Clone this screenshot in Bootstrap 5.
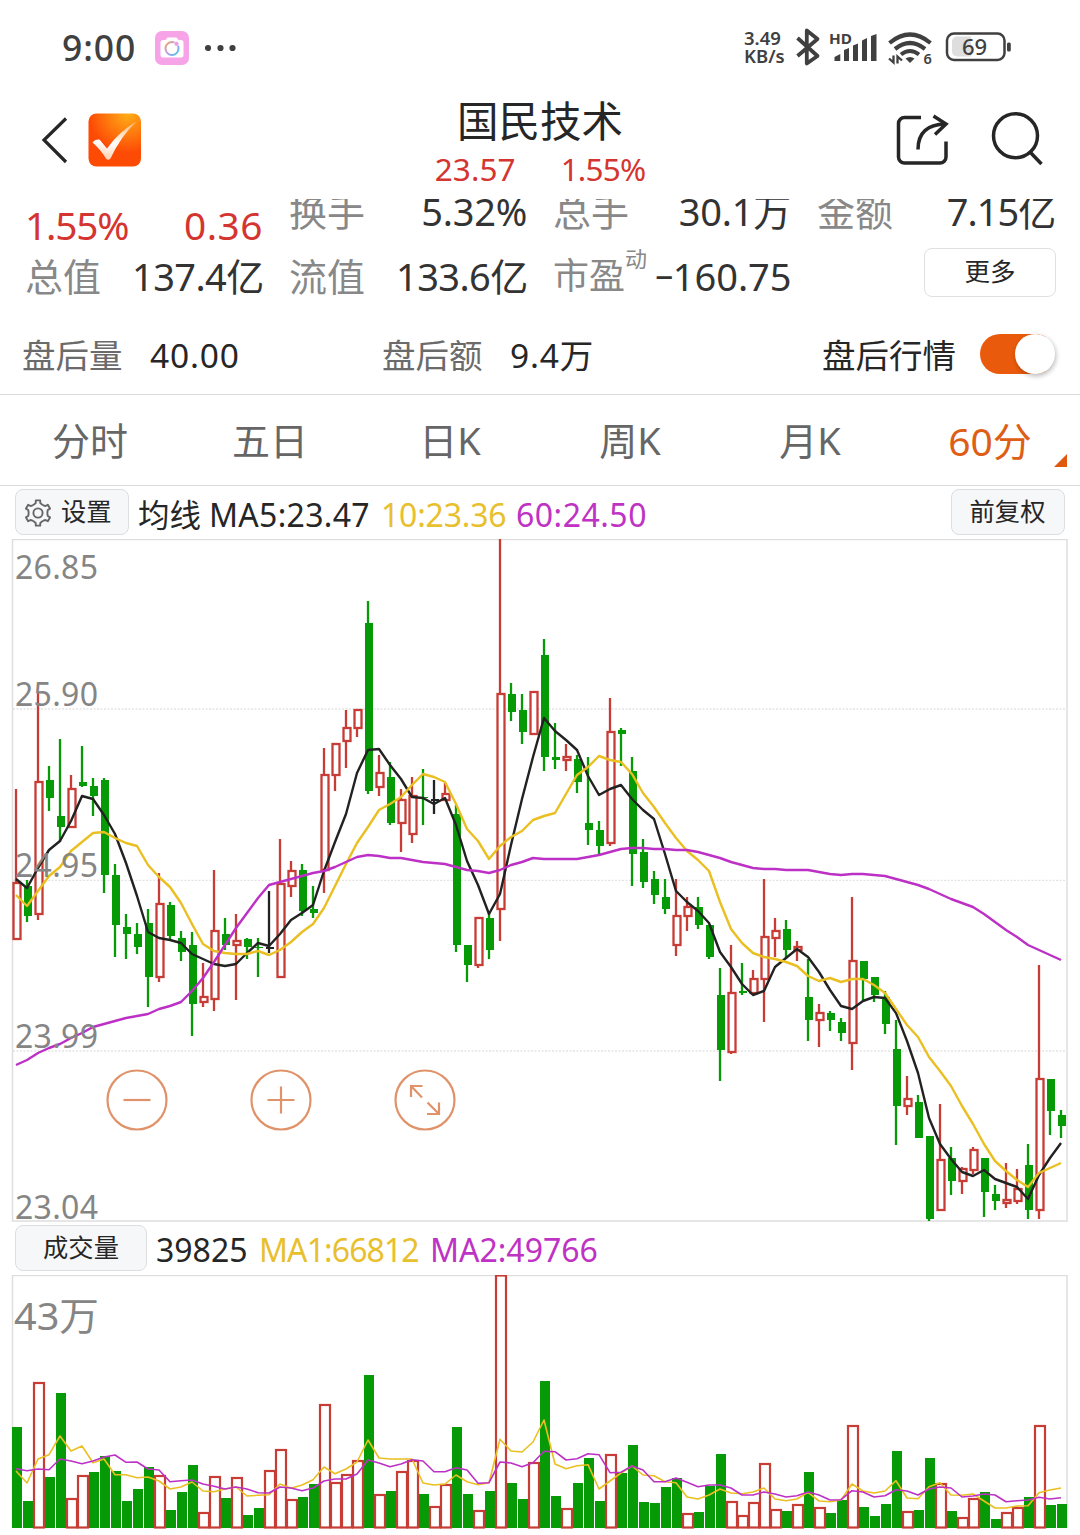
<!DOCTYPE html>
<html lang="zh-CN">
<head>
<meta charset="utf-8">
<meta name="viewport" content="width=device-width, initial-scale=1">
<title>国民技术</title>
<link href="https://cdn.jsdelivr.net/npm/bootstrap@5.3.0/dist/css/bootstrap.min.css" rel="stylesheet">
<style>
body{width:1080px;height:1535px;overflow:hidden;background:#fff;color:#262626;font-family:"Noto Sans","Noto Sans CJK SC",sans-serif;line-height:1;white-space:nowrap}
svg{display:block;flex:none}
svg text{font-family:"Noto Sans","Noto Sans CJK SC",sans-serif}
.status{height:95px;padding:0 69px 0 62px;color:#404040}
.clock{font-size:35.5px;font-weight:500;letter-spacing:.9px;width:93px}
.speed{font-size:18.5px;font-weight:600;line-height:18.5px;width:51px;padding-bottom:1px}
.head{height:104px}
.head-side{width:360px}
.stock{font-size:41.5px;line-height:52px}
.sub{font-size:31.5px;line-height:44px;color:#d43530;letter-spacing:.1px}
.quotes{height:127px;padding-left:25px;column-gap:26px;overflow:hidden}
.qcol{width:238px}
.cell{height:62px;font-size:38px;line-height:62px}
.cell.first{height:46px;line-height:25px}
.cell.first.big{line-height:52px;letter-spacing:-1.2px;color:#d43530;font-size:38.8px}
.big span+span{letter-spacing:.5px}
.key{color:#888}
.val{color:#333;letter-spacing:-.6px;margin-right:-.6px}
.first .val{letter-spacing:-.2px;margin-right:-.2px}
.sup{font-size:22px;line-height:24px;align-self:flex-start;margin-top:1px;width:39px}
.pe{letter-spacing:0;font-size:38px}
.pe .neg{display:inline-block;transform:scaleX(.85);margin-left:-6px;width:18px;transform-origin:left}
.more{width:132px;height:49px;border:1.5px solid #e0e0e0;border-radius:8px;font-size:25.5px;line-height:40px;padding:0 0 4px;color:#262626;margin-right:-1px}
.after{height:69px;padding:0 25px 9px 22px;font-size:33.5px;border-bottom:1.5px solid #d9d9d9}
.after .key{color:#6b6b6b}
.wide{letter-spacing:.8px}
.toggle{width:75px;height:40px;border-radius:20px;background:linear-gradient(90deg,#e95a0c 66px,transparent 66px);margin:0 0 4px 24px}
.knob{width:40px;height:40px;border-radius:50%;background:#fff;box-shadow:1px 2px 5px rgba(0,0,0,.28)}
.tabs{height:91px;border-bottom:1.5px solid #d9d9d9;font-size:38px;color:#666}
.tabs .nav-link{width:180px;height:90px;padding:0;color:#666;line-height:91px}
.tabs .nav-link.active{color:#dd5e14;font-size:39px}
.corner{right:13px;bottom:18px;border-left:13px solid transparent;border-bottom:13px solid #e0580e}
.info{height:53px;padding:3px 15.5px 0 15px;font-size:32px}
.chip{height:46px;border:1.5px solid #dcdee0;border-radius:8px;background:#f6f7f9;font-size:25.3px;color:#262626;padding:0 0 2px;line-height:39px}
.gold{color:#e8c02e}.violet{color:#be32c4}
</style>
</head>
<body>
<div class="status d-flex align-items-center justify-content-between">
  <div class="d-flex align-items-center">
    <span class="clock">9:00</span>
    <svg width="34" height="34" viewBox="0 0 34 34"><defs><linearGradient id="ring" x1="0" y1="0" x2="1" y2="1"><stop offset="0" stop-color="#f5a35c"/><stop offset=".5" stop-color="#b79cf0"/><stop offset="1" stop-color="#3fc8e8"/></linearGradient></defs><rect width="34" height="34" rx="7" fill="#f7a3e8"/><path d="M8.500 9h2l2-2.500h9l2 2.500h2.500a2.500 2.500 0 0 1 2.500 2.500V24a2.500 2.500 0 0 1-2.500 2.500h-17.500A2.500 2.500 0 0 1 5.500 24V11.500A2.500 2.500 0 0 1 8.500 9z" fill="#fff"/><circle cx="17" cy="17.500" r="6.500" fill="none" stroke="url(#ring)" stroke-width="2"/><circle cx="21.500" cy="12.800" r="2.400" fill="#e79be8" stroke="#fff" stroke-width=".6"/></svg>
    <svg class="ms-3" width="32" height="8" viewBox="0 0 32 8"><g fill="#404040"><circle cx="3" cy="4" r="3.100"/><circle cx="15.500" cy="4" r="3.100"/><circle cx="27.500" cy="4" r="3.100"/></g></svg>
  </div>
  <div class="d-flex align-items-center">
    <div class="speed"><div>3.49</div><div>KB/s</div></div>
    <svg width="216" height="40" viewBox="795 27.500 216 40">
      <path d="M797.500 37.500L817.500 55.500L806.800 63V30L817.500 38.500L797.500 55.500" fill="none" stroke="#404040" stroke-width="3.800" stroke-linejoin="round"/>
      <text x="829" y="43" font-size="15" font-weight="700" fill="#404040" textLength="23" lengthAdjust="spacingAndGlyphs">HD</text>
      <path d="M834.500 60.500v-4l5.800-3v7zM844 60.500V49.500l5-2V60.500zM853 60.500V45l5-2V60.500zM862 60.500V40l5-2.500V60.500zM871 60.500V35.500l5.500-2V60.500z" fill="#404040"/>
      <g fill="none" stroke="#404040" stroke-width="4.200"><path d="M889.500 42.500Q910 25.500 930.500 42.500"/><path d="M895 48.500Q910 36.500 925 48.500"/><path d="M901 54Q910 47 919 54" stroke-width="4"/></g>
      <path d="M905.500 58q4.500-3 9 0l-4.500 4.500z" fill="#404040"/>
      <path d="M889 58l4.500 4v-7M897.500 63v-7l4.500 4" fill="none" stroke="#404040" stroke-width="2.300"/>
      <text x="923.500" y="63" font-size="14.500" font-weight="600" fill="#404040">6</text>
      <path d="M957 36h14v20h-14a5 5 0 0 1-5-5V41a5 5 0 0 1 5-5z" fill="#dedede"/>
      <rect x="947" y="33" width="57.500" height="26.500" rx="7" fill="none" stroke="#404040" stroke-width="2.500"/>
      <rect x="1007" y="42" width="3.800" height="9" rx="1.500" fill="#404040"/>
      <text x="962" y="54.500" font-size="22" font-weight="500" fill="#404040">69</text>
    </svg>
  </div>
</div>
<header class="head d-flex justify-content-between">
  <div class="head-side d-flex">
    <svg width="150" height="104" viewBox="0 95 150 104"><defs><radialGradient id="sun" cx=".75" cy="0" r=".75"><stop offset="0" stop-color="#ffae17"/><stop offset="1" stop-color="#fd4a05"/></radialGradient><linearGradient id="tick" x1="0" y1="1" x2=".2" y2="0"><stop offset="0" stop-color="#ffc9a4"/><stop offset=".5" stop-color="#fff"/><stop offset="1" stop-color="#ffc48c"/></linearGradient></defs>
    <path d="M66 118.500L44 140L66 162" fill="none" stroke="#262626" stroke-width="3.200"/>
    <rect x="88.500" y="113.500" width="52.500" height="53" rx="8" fill="url(#sun)"/>
    <path d="M92.500 142.500q2.500-3.500 7-3l7.500 9q12-17 29.500-27q-16 15-26 37q-2.500 2.500-4.500 0q-5-8.500-13.500-16z" fill="url(#tick)"/></svg>
  </div>
  <div class="text-center">
    <div class="stock">国民技术</div>
    <div class="sub d-flex justify-content-center"><span style="width:126px;text-align:left">23.57</span><span style="letter-spacing:-.8px">1.55%</span></div>
  </div>
  <div class="head-side d-flex justify-content-end">
    <svg width="190" height="104" viewBox="890 95 190 104"><g fill="none" stroke="#262626" stroke-width="3.500"><path d="M921 117.500H904.500a6 6 0 0 0-6 6V157a6 6 0 0 0 6 6H940a6 6 0 0 0 6-6V141.500"/><path d="M918 149.500Q918 124.500 945.500 124"/><path d="M933.500 116l12.500 8l-11 10.500"/><circle cx="1015.500" cy="135.700" r="22"/><path d="M1030 152l11.500 12"/></g></svg>
  </div>
</header>
<section class="quotes d-flex">
  <div class="qcol">
    <div class="cell first big d-flex justify-content-between"><span>1.55%</span><span>0.36</span></div>
    <div class="cell d-flex justify-content-between"><span class="key">总值</span><span class="val">137.4亿</span></div>
  </div>
  <div class="qcol">
    <div class="cell first d-flex justify-content-between"><span class="key">换手</span><span class="val">5.32%</span></div>
    <div class="cell d-flex justify-content-between"><span class="key">流值</span><span class="val">133.6亿</span></div>
  </div>
  <div class="qcol">
    <div class="cell first d-flex justify-content-between"><span class="key">总手</span><span class="val">30.1万</span></div>
    <div class="cell d-flex"><span class="key" style="font-size:36px">市盈</span><span class="key sup">动</span><span class="val pe ms-auto"><span class="neg">−</span>160.75</span></div>
  </div>
  <div class="qcol">
    <div class="cell first d-flex justify-content-between"><span class="key">金额</span><span class="val" style="letter-spacing:-1px">7.15亿</span></div>
    <div class="d-flex justify-content-end" style="padding-top:3px"><button class="btn more">更多</button></div>
  </div>
</section>
<section class="after d-flex align-items-center">
  <span class="key" style="width:128px">盘后量</span><span class="wide" style="width:232px">40.00</span>
  <span class="key" style="width:128px">盘后额</span><span class="wide">9.4万</span>
  <span class="ms-auto">盘后行情</span>
  <div class="toggle d-flex justify-content-end"><div class="knob"></div></div>
</section>
<nav class="tabs nav flex-nowrap text-center position-relative">
  <a class="nav-link">分时</a><a class="nav-link">五日</a><a class="nav-link">日K</a><a class="nav-link">周K</a><a class="nav-link">月K</a><a class="nav-link active">60分</a>
  <span class="corner position-absolute"></span>
</nav>
<div class="info d-flex align-items-start">
  <button class="btn chip d-flex align-items-center" style="width:114px"><svg width="28" height="28" viewBox="-14 -14 28 28" style="margin:3px 9px 0 8px"><path id="gear" fill="none" stroke="#666" stroke-width="1.900" stroke-linejoin="round"/><circle r="4.600" fill="none" stroke="#666" stroke-width="1.900"/></svg>设置</button>
  <div class="d-flex" style="line-height:51px;margin-left:9px"><span style="font-size:31.500px;width:71px">均线</span><span style="width:172px;letter-spacing:.3px">MA5:23.47</span><span class="gold" style="width:135px;letter-spacing:-.2px">10:23.36</span><span class="violet" style="letter-spacing:.5px">60:24.50</span></div>
  <button class="btn chip ms-auto" style="width:114px">前复权</button>
</div>
<svg id="price" width="1080" height="683" viewBox="0 539 1080 683"></svg>
<div class="info d-flex align-items-start">
  <button class="btn chip" style="width:132px">成交量</button>
  <div class="d-flex" style="line-height:49px;margin-left:9px"><span style="width:103px">39825</span><span class="gold" style="width:171px;letter-spacing:-.9px">MA1:66812</span><span class="violet">MA2:49766</span></div>
</div>
<svg id="volume" width="1080" height="260" viewBox="0 1275 1080 260"></svg>
<script src="https://cdn.jsdelivr.net/npm/bootstrap@5.3.0/dist/js/bootstrap.bundle.min.js"></script>
<script>
// Gear outline: six teeth around a ring
const pts=[];
for(let k=0;k<6;k++){const c=k*60-90;[[-25,9.4],[-13,10.2],[-10,12.8],[10,12.8],[13,10.2],[25,9.4]].forEach(([d,r])=>{const a=(c+d)*Math.PI/180;pts.push((r*Math.cos(a)).toFixed(1)+','+(r*Math.sin(a)).toFixed(1))})}
document.getElementById('gear').setAttribute('d','M'+pts.join('L')+'Z');

// type, high, body top, body bottom, low
const candles=`r 789 883 939 939|g 880 886 916 922|r 693 782 914 920|g 766 780 798 811|g 739 816 827 842|r 775 789 827 827|g 746 782 786 787|g 778 786 796 816|g 778 780 875 893|g 864 875 925 957|g 914 927 934 959|g 923 934 947 954|g 909 923 977 1007|r 873 904 977 982|g 902 905 936 940|g 931 938 952 961|g 932 945 1004 1036|r 963 997 1002 1007|r 870 931 999 1011|g 918 934 945 950|r 914 941 945 1000|g 938 939 947 959|g 938 947 948 977|k 891 947 949 953|r 839 884 977 977|r 861 871 886 897|g 864 870 911 916|g 886 909 913 918|r 748 775 870 893|r 743 744 775 791|r 710 728 741 768|r 709 710 728 737|g 601 623 791 794|r 755 773 787 796|g 762 777 823 825|r 789 800 823 852|r 777 796 834 843|g 769 797 798 825|k 780 799 801 814|r 783 794 800 801|g 805 814 945 952|g 945 945 965 982|r 918 918 965 968|g 913 918 950 959|r 539 694 909 941|g 683 694 712 721|g 694 710 732 744|r 692 692 734 734|g 639 655 757 771|g 723 757 760 769|r 744 757 760 771|g 755 759 782 793|g 757 823 830 845|g 821 830 846 856|r 698 732 843 846|g 728 730 734 766|g 757 771 854 886|g 839 852 882 888|g 871 879 895 904|g 879 897 909 914|r 879 916 945 956|r 897 907 916 931|g 897 907 925 929|g 925 925 957 959|g 968 995 1050 1081|r 945 993 1052 1054|g 963 991 993 995|r 970 979 993 994|r 879 937 979 1022|r 918 931 938 957|g 920 929 950 959|r 941 947 950 961|g 959 997 1020 1041|r 1004 1013 1020 1047|g 1011 1013 1020 1031|g 1018 1022 1033 1041|r 897 961 1043 1070|g 961 961 979 1002|g 977 977 995 1002|g 991 997 1024 1034|g 1020 1049 1106 1145|r 1076 1099 1106 1115|g 1095 1102 1138 1138|g 1136 1136 1219 1221|r 1104 1160 1210 1210|g 1147 1158 1181 1195|r 1167 1169 1181 1194|r 1147 1150 1170 1174|g 1158 1158 1192 1217|g 1185 1194 1201 1210|r 1163 1200 1203 1208|r 1169 1189 1201 1204|g 1144 1165 1210 1219|r 965 1079 1210 1219|g 1079 1079 1111 1135|g 1110 1115 1126 1138`.split('|').map(s=>s.split(' '));
const ma5=[879,888,868,850,841,821,796,799,815,834,863,896,932,938,940,943,954,959,964,966,964,953,943,946,934,920,913,905,871,842,814,773,750,749,765,779,797,798,804,798,825,861,885,914,894,845,799,757,718,731,740,750,776,795,789,785,799,810,819,854,891,902,911,923,952,967,984,995,991,967,958,949,957,972,990,1006,1009,1001,997,998,1013,1041,1073,1118,1144,1159,1172,1176,1170,1179,1183,1187,1199,1175,1158,1143];
const ma10=[895,906,891,876,867,851,842,833,832,838,843,846,865,877,887,903,924,944,951,953,954,954,951,955,950,942,932,924,908,886,864,843,827,810,804,797,785,774,777,782,804,829,841,859,846,837,831,820,816,813,794,775,767,756,760,762,774,793,807,823,838,851,860,871,902,929,943,953,957,959,962,966,976,981,978,982,979,979,985,993,1009,1025,1037,1057,1071,1086,1106,1124,1144,1161,1171,1180,1187,1173,1168,1163];
const ma60=[1065,1060,1053,1048,1044,1038,1033,1027,1024,1021,1018,1016,1014,1009,1006,1002,991,978,962,945,928,913,898,885,882,879,876,873,871,867,862,857,855,856,858,858,860,862,863,864,867,870,871,873,870,865,862,858,859,859,859,859,857,855,852,849,848,848,849,849,850,850,852,855,858,862,865,868,869,869,870,870,870,872,874,875,874,874,875,876,879,882,885,889,894,899,903,907,914,922,930,937,945,950,955,960];
const vols=[1427,1501,1383,1477,1393,1499,1476,1472,1456,1471,1501,1489,1467,1476,1510,1492,1465,1513,1477,1498,1478,1515,1508,1471,1450,1500,1497,1484,1405,1483,1475,1461,1375,1495,1491,1472,1461,1494,1507,1485,1427,1494,1511,1491,1275.5,1483,1499,1463,1381,1496,1509,1483,1458,1501,1455,1473,1445,1502,1503,1487,1478,1514,1512,1486,1454,1502,1516,1503,1464,1510,1511,1505,1472,1508,1513,1500,1426,1507,1516,1504,1451,1512,1510,1458,1484,1511,1518,1499,1492,1519,1513,1508,1497,1426,1505,1504];
const hollow=new Set([2,5,6,13,17,18,20,24,25,23,28,29,30,31,33,35,36,38,39,42,44,47,50,54,61,65,66,67,68,69,71,73,76,81,84,86,87,90,91,93]);
// Volume averages, in thirds of a pixel below the 1270 line
const v1=[603,639,567,554,498,543,528,578,567,614,614,623,621,633,657,651,636,663,665,657,651,678,676,674,642,655,645,629,591,611,597,576,510,564,567,567,567,639,645,642,615,635,644,638,508,543,546,516,450,582,596,587,584,657,633,609,588,615,617,635,638,681,687,675,657,669,671,666,654,687,692,687,667,693,695,690,642,663,669,663,632,684,686,650,638,675,676,672,693,714,714,708,707,668,660,654];
const v2=[596,602,597,599,567,573,581,573,561,555,577,576,597,600,635,632,630,642,649,657,651,657,668,669,651,654,662,654,633,627,627,612,570,579,590,582,569,573,605,605,593,600,640,638,576,579,590,578,544,545,570,566,551,554,608,607,588,600,635,635,624,637,650,645,645,654,675,675,666,672,681,677,666,675,690,689,662,666,681,677,659,663,675,657,651,654,681,678,672,675,695,692,690,682,687,683];
const G='#069b06',R='#c83c36',K='#222';
const line=(a,c,w,f=v=>v)=>`<polyline fill="none" stroke="${c}" stroke-width="${w}" stroke-linejoin="round" points="${a.map((v,i)=>(16+11*i)+','+f(v)).join(' ')}"/>`;
let s='<g stroke="#e4e4e4" stroke-width="1.3" stroke-dasharray="2 1.500">'+[709,880.3,1051].map(y=>`<path d="M13 ${y}H1066"/>`).join('')+'</g><path d="M12.500 539.500H1067V1221H12.500Z" fill="none" stroke="#dedede" stroke-width="1.500"/>';
candles.forEach(([t,h,a,b,l],i)=>{const x=16+11*i;h=+h;a=+a;b=+b;l=+l;
 if(t=='r'){s+=`<path d="M${x} ${h}V${a}M${x} ${b}V${l}" stroke="${R}" stroke-width="2.300"/><rect x="${x-2.5}" y="${a}" width="7" height="${b-a}" fill="#fff" stroke="${R}" stroke-width="2.300"/>`}
 else{const c=t=='g'?G:K;s+=`<path d="M${x} ${h}V${l}" stroke="${c}" stroke-width="2.300"/><rect x="${x-3}" y="${a}" width="8" height="${b-a}" fill="${c}"/>`}});
s+=line(ma5,K,2.4)+line(ma10,'#eabf22',2.4)+line(ma60,'#bd30c6',2.4);
[[579,'26.85'],[705.5,'25.90'],[877,'24.95'],[1048,'23.99'],[1218.5,'23.04']].forEach(([y,t])=>s+=`<text x="15" y="${y}" font-size="32" fill="#858585" textLength="83">${t}</text>`);
s+='<g fill="none" stroke="#e0936a" stroke-width="2.200"><circle cx="137" cy="1100" r="29.500"/><path d="M123.500 1100h27"/><circle cx="281" cy="1100" r="29.500"/><path d="M267.500 1100h27M281 1086.500v27"/><circle cx="425" cy="1100" r="29.500"/><path d="M422 1097.500L411 1086M411 1097V1086H422.500M427.500 1102.500L439 1114M439 1102.500V1114H427"/></g>';
document.getElementById('price').innerHTML=s;
s='<path d="M12.500 1528V1275.500H1067V1528" fill="none" stroke="#dedede" stroke-width="1.500"/>';
vols.forEach((y,i)=>{const x=12+11*i;s+=hollow.has(i)?'':`<rect x="${x}" y="${y}" width="10" height="${1528-y}" fill="${G}"/>`});
vols.forEach((y,i)=>{const x=12+11*i;s+=hollow.has(i)?`<rect x="${x}" y="${y}" width="10" height="${1527.5-y}" fill="#fff" stroke="${R}" stroke-width="2.200"/>`:''});
s+=line(v1,'#eabf22',1.6,v=>(v/3+1270).toFixed(1))+line(v2,'#bd30c6',1.6,v=>(v/3+1270).toFixed(1));
s+='<text x="14" y="1329.500" font-size="39" fill="#858585" textLength="85" lengthAdjust="spacingAndGlyphs">43万</text>';
document.getElementById('volume').innerHTML=s;
</script>
</body>
</html>
